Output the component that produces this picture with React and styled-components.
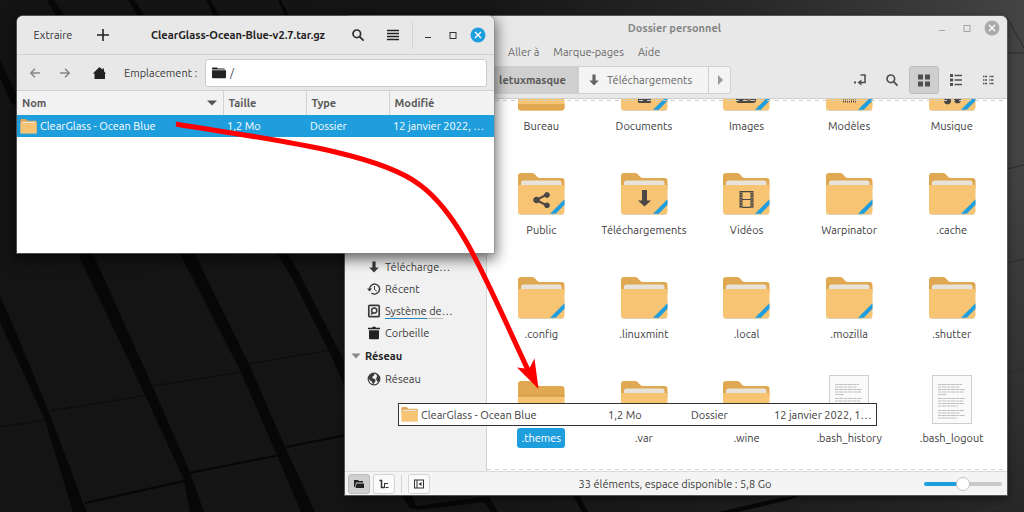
import React from "react";
import styled, { createGlobalStyle, css } from "styled-components";

const Global = createGlobalStyle`
  * { box-sizing: border-box; }
  body {
    margin: 0;
    background: #131313;
    color: #3c3c3c;
    font: 11px/16px "Ubuntu", "Open Sans", "Noto Sans", sans-serif;
  }
  button, input { font: inherit; color: inherit; }
`;

const Desktop = styled.main`
  position: relative;
  min-height: 100vh;
  overflow: hidden;
`;

const Wallpaper = styled.svg`
  position: absolute;
  inset: 0;
  width: 100%;
  height: 100%;
`;

const Window = styled.section`
  position: absolute;
  top: 16px;
  display: flex;
  flex-direction: column;
  overflow: hidden;
  border-radius: 6px 6px 0 0;
  background: #fff;
`;

const FilesWindow = styled(Window)`
  left: 345px;
  right: 17px;
  bottom: 17px;
  box-shadow: 0 0 0 1px #555, 0 3px 8px #0008;
`;

const ArchiveWindow = styled(Window)`
  left: 17px;
  width: 477px;
  height: 237px;
  box-shadow: 0 0 0 1px #8888, 0 4px 14px 2px #0009;
`;

const PlainButton = styled.button`
  display: inline-flex;
  align-items: center;
  justify-content: center;
  flex: none;
  padding: 0;
  border: 0;
  background: none;
`;

const WindowButton = styled(PlainButton)`
  width: 25px;
  height: 24px;
`;

const ToolButton = styled(PlainButton)`
  width: ${(p) => p.$width || 30}px;
  height: 28px;
  border-radius: 3px;
  color: ${(p) => (p.$strong ? "#2e2e2e" : "#505050")};
  ${(p) => p.$active && css`
    background: #cfcfcf;
    border: 1px solid #bfbfbf;
  `}
`;

/* ---------- file manager ---------- */

const FilesHeader = styled.header`
  flex: none;
  height: 83px;
  background: #e8e8e8;
  border-bottom: 1px solid #cdcdcd;
  color: #6a6a6a;
`;

const TitleRow = styled.div`
  display: grid;
  grid-template-columns: 1fr auto 1fr;
  align-items: center;
  height: 24px;
  padding-right: 3px;
`;

const Title = styled.h1`
  grid-column: 2;
  margin: 0;
  font-size: 11px;
  font-weight: 700;
  color: #858585;
`;

const TitleControls = styled.div`
  display: flex;
  justify-content: flex-end;
  button { color: #a4a4a4; }
`;

const MenuRow = styled.nav`
  display: flex;
  gap: 14px;
  align-items: center;
  height: 24px;
  padding-left: 163px;
`;

const ToolRow = styled.div`
  display: flex;
  justify-content: space-between;
  padding: 2px 4px 0 141px;
`;

const PathBar = styled.div`
  display: flex;
  height: 28px;
  border: 1px solid #d0d0d0;
  border-radius: 3px;
  background: #f4f4f4;
`;

const Crumb = styled(PlainButton)`
  gap: 6px;
  width: ${(p) => p.$width}px;
  border-right: 1px solid #d0d0d0;
  color: #666;
  ${(p) => p.$place && css`
    justify-content: flex-start;
    padding-left: 8px;
  `}
  &:last-child { border-right: 0; }
  ${(p) => p.$current && css`
    background: #cfcfcf;
    color: #5a5a5a;
    font-weight: 700;
  `}
`;

const ToolGroup = styled.div`
  display: flex;
  gap: 2px;
`;

const FilesBody = styled.div`
  display: flex;
  flex: 1;
  min-height: 0;
`;

const Sidebar = styled.nav`
  display: flex;
  flex-direction: column;
  justify-content: flex-end;
  flex: none;
  width: 142px;
  padding-bottom: 81px;
  overflow: hidden;
  background: #f1f1f1;
  border-right: 1px solid #d2d2d2;
`;

const Place = styled.a`
  display: flex;
  align-items: center;
  gap: 4px;
  height: 22px;
  padding-left: 22px;
  color: #3a3a3a;
  text-decoration: none;
`;

const PlaceName = styled.span`
  line-height: 16px;
  ${(p) => p.$usage && css`
    background: linear-gradient(90deg, #2a87bd 62%, #bbb 62%, #bbb 86%, #0000 86%) bottom / 100% 1px no-repeat;
  `}
`;

const PlaceGroup = styled.h2`
  display: flex;
  align-items: center;
  gap: 4px;
  height: 24px;
  margin: 0;
  padding-left: 6px;
  font-size: 11px;
  font-weight: 700;
  color: #222;
`;

const FilesView = styled.div`
  position: relative;
  display: flex;
  flex-direction: column;
  justify-content: flex-end;
  flex: 1;
  min-width: 0;
  overflow: hidden;
  background: #fff;
  &::before, &::after {
    content: "";
    position: absolute;
    left: 0;
    right: 0;
    height: 1px;
    background: repeating-linear-gradient(90deg, #cfcfcf 0 4px, #0000 4px 8px);
  }
  &::before { top: 1px; }
  &::after { bottom: 1px; }
`;

const IconGrid = styled.ul`
  display: grid;
  grid-template-columns: repeat(5, 1fr);
  row-gap: 31px;
  margin: 0;
  padding: 0 4px 23px 3px;
  list-style: none;
`;

const FileItem = styled.li`
  display: flex;
  flex-direction: column;
  align-items: center;
  gap: 5px;
  height: 73px;
`;

const FileIconBox = styled.span`
  display: block;
  height: 48px;
`;

const FileName = styled.span`
  padding: 2px 4px;
  border-radius: 3px;
  white-space: nowrap;
  background: ${(p) => (p.$selected ? "#1f9ede" : "none")};
  color: ${(p) => (p.$selected ? "#fff" : "#3c3c3c")};
`;

const StatusBar = styled.footer`
  display: grid;
  grid-template-columns: 1fr auto 1fr;
  align-items: center;
  flex: none;
  height: 24px;
  padding: 0 5px 0 3px;
  background: #f4f4f4;
  border-top: 1px solid #dcdcdc;
`;

const StatusGroup = styled.div`
  display: flex;
  align-items: center;
  gap: 3px;
`;

const StatusButton = styled(PlainButton)`
  width: 22px;
  height: 20px;
  border: 1px solid ${(p) => (p.$active ? "#bdbdbd" : "#d4d4d4")};
  border-radius: 3px;
  background: ${(p) => (p.$active ? "#cfcfcf" : "#fafafa")};
`;

const Divider = styled.span`
  width: 1px;
  height: ${(p) => p.$height}px;
  margin: 0 ${(p) => p.$space}px;
  background: #d4d4d4;
`;

const Zoom = styled.input`
  justify-self: end;
  width: 78px;
  height: 14px;
  margin: 0;
  appearance: none;
  background: none;
  &::-webkit-slider-runnable-track {
    height: 4px;
    border-radius: 2px;
    background: linear-gradient(90deg, #1f9ede 50%, #c9c9c9 50%);
  }
  &::-webkit-slider-thumb {
    appearance: none;
    width: 14px;
    height: 14px;
    margin-top: -5px;
    border: 1px solid #c4c4c4;
    border-radius: 50%;
    background: #fff;
  }
`;

/* ---------- archive manager ---------- */

const ArchiveHeader = styled.header`
  display: flex;
  align-items: center;
  flex: none;
  height: 39px;
  padding: 0 4px 0 6px;
  background: #e8e8e8;
  border-bottom: 1px solid #d0d0d0;
  color: #333;
`;

const ArchiveTitle = styled.h1`
  flex: 1;
  margin: 0 0 0 14px;
  font-size: 11px;
  font-weight: 700;
  text-align: center;
  white-space: nowrap;
  color: #222;
`;

const TextButton = styled(PlainButton)`
  width: 60px;
  height: 28px;
`;

const LocationRow = styled.div`
  display: flex;
  align-items: center;
  flex: none;
  height: 36px;
  padding: 0 7px 0 3px;
  background: #e8e8e8;
  border-bottom: 1px solid #d0d0d0;
`;

const LocationLabel = styled.label`
  width: 81px;
  margin-left: 6px;
  white-space: nowrap;
`;

const LocationField = styled.div`
  display: flex;
  align-items: center;
  flex: 1;
  gap: 4px;
  height: 28px;
  padding: 0 6px;
  border: 1px solid #cbcbcb;
  border-radius: 3px;
  background: #fff;
`;

const LocationInput = styled.input`
  flex: 1;
  min-width: 0;
  padding: 0;
  border: 0;
  outline: 0;
  background: none;
`;

const Listing = styled.table`
  width: 100%;
  table-layout: fixed;
  border-collapse: collapse;
`;

const HeadCell = styled.th`
  width: ${(p) => (p.$width ? p.$width + "px" : "auto")};
  height: 24px;
  padding: 0 5px;
  border-right: 1px solid #d2d2d2;
  background: #f2f2f2;
  font-weight: 700;
  text-align: left;
  color: #5a5a5a;
  &:last-child { border-right: 0; }
`;

const SortHead = styled.span`
  display: flex;
  align-items: center;
  justify-content: space-between;
`;

const Cell = styled.td`
  height: 22px;
  padding: 0 5px 0 ${(p) => (p.$first ? 3 : 4)}px;
  overflow: hidden;
  text-overflow: ellipsis;
  white-space: nowrap;
  background: #1f9ede;
  color: #fff;
`;

const NameWithIcon = styled.span`
  display: flex;
  align-items: center;
  gap: 3px;
`;

const DragRow = styled.div`
  position: absolute;
  left: 398px;
  top: 403px;
  display: grid;
  grid-template-columns: 207px 83px 83px 1fr;
  align-items: center;
  width: 479px;
  height: 23px;
  padding: 0 3px 0 2px;
  border: 1px solid #333;
  background: #fff;
  white-space: nowrap;
`;

const DragArrow = styled.svg`
  position: absolute;
  left: 0;
  top: 0;
  pointer-events: none;
`;

/* ---------- drawings ---------- */

const Svg = ({ w = 16, h = w, children }) => (
  <svg width={w} height={h} viewBox={`0 0 ${w} ${h}`} fill="none" stroke="currentColor" aria-hidden="true">
    {children}
  </svg>
);

const MinimizeIcon = () => <Svg w={14}><path d="M4 9.5h6" strokeWidth="1" /></Svg>;
const MaximizeIcon = () => <Svg w={14}><rect x="4" y="4.500" width="6" height="6" /></Svg>;
const CloseIcon = ({ fill }) => (
  <Svg w={16}>
    <circle cx="8" cy="8" r="7.5" fill={fill} stroke="none" />
    <path d="M5 5l6 6M11 5l-6 6" stroke="#fff" strokeWidth="1.4" />
  </Svg>
);
const SearchIcon = () => (
  <Svg w={14}><circle cx="5.8" cy="5.8" r="3.8" strokeWidth="1.7" /><path d="M8.6 8.6l4 4" strokeWidth="1.9" /></Svg>
);
const DownIcon = () => (
  <Svg w={14}><path d="M5.4 1.5h3.200v6h3.200L7 12.600 2.200 7.500h3.200z" fill="currentColor" stroke="none" /></Svg>
);
const ArrowIcon = ({ flip }) => (
  <Svg w={14}><path d={flip ? "M2 7h9M7 2.800L11.200 7 7 11.200" : "M12 7H3M7 2.800L2.800 7 7 11.200"} strokeWidth="1.5" stroke="#858585" /></Svg>
);
const HomeIcon = () => (
  <Svg w={14}><path d="M7.500 1L.8 7.500H2.500V13h10.500V7.500h1L12 5.300V2.500h-1.500v1.300z" fill="#222" stroke="none" /></Svg>
);
const SolidFolder = () => (
  <Svg w={14}><path d="M0 2.500q0-1 1-1h4l1 1h6q1 0 1 1H0zM0 4.300h14v7q0 1-1 1H1q-1 0-1-1z" fill="#222" stroke="none" /></Svg>
);
const RecentIcon = () => (
  <Svg w={14}>
    <path d="M2.600 7.500A5 5 0 1 1 4.500 11" strokeWidth="1.400" />
    <path d="M7.500 4v3.500l2.200 1.600" />
    <path d="M0 6.500h5L2.500 9.500z" fill="currentColor" stroke="none" />
  </Svg>
);
const DiskIcon = () => (
  <Svg w={14}>
    <rect x="1.800" y="1.300" width="10.400" height="11.400" rx="1" strokeWidth="1.700" />
    <circle cx="7.200" cy="6.500" r="2.600" strokeWidth="1.500" />
    <path d="M4 10.300l2-1.600" strokeWidth="1.500" />
  </Svg>
);
const TrashIcon = () => (
  <Svg w={14}><path d="M1 1.800H5l.7-1h2.600l.7 1h4v1.500H1zM2 4.200h10v8q0 1-1 1H3q-1 0-1-1z" fill="#222" stroke="none" /></Svg>
);
const GlobeIcon = () => (
  <Svg w={14}>
    <circle cx="7" cy="7" r="5.800" strokeWidth="1.200" />
    <path d="M1.500 5.500L4 2l3.500-.500-.5 2-2 1.500 1 1.500 2.500.8-.2 2.200L6 12.500 4.800 9.500 2.500 8zM9.500 2l3 3-.2 4-2 1L9 6.500l1-1.500z" fill="currentColor" stroke="none" />
  </Svg>
);

const Emblem = ({ kind }) => {
  const dark = "#4a4744";
  switch (kind) {
    case "share":
      return (
        <g fill={dark} stroke={dark}>
          <path d="M30 27.500L19 33l11 5.500" fill="none" strokeWidth="2" />
          <circle cx="19.500" cy="33" r="2.800" /><circle cx="30" cy="28" r="2.400" /><circle cx="30" cy="38.300" r="2.400" />
        </g>
      );
    case "down":
      return <path d="M22 23h5v10.500h4L24.500 39.500 18 33.500h4z" fill={dark} stroke="none" />;
    case "film":
      return (
        <g stroke={dark} fill="none">
          <path d="M19 24v17M30 24v17" strokeWidth="3" />
          <path d="M19 25v16M30 25v16" stroke="#f7c473" strokeDasharray="1 1.500" />
          <path d="M20 24.700h9M20 32.500h9M20 40.300h9" strokeWidth="1.200" />
        </g>
      );
    case "document":
      return <path d="M18 24h13v15q0 1-1 1H19q-1 0-1-1z" fill={dark} stroke="none" />;
    case "image":
      return <><path d="M14 26h20v11q0 3-3 3H17q-3 0-3-3z" fill={dark} stroke="none" /><path d="M20 38l3-2 2 1 3-2 2 3z" fill="#8b7450" stroke="none" /></>;
    case "template":
      return <path d="M18 26.500h13M18 29.500h13M18 32.500h13M18 35.500h13M18 38.500h13" stroke={dark} strokeWidth="2" strokeDasharray="1 1" />;
    case "music":
      return <g fill={dark} stroke={dark}><circle cx="19.500" cy="38" r="3" /><circle cx="29.500" cy="37" r="3" /><path d="M22 38V26l10-2v13" fill="none" strokeWidth="1" /></g>;
    default:
      return null;
  }
};

const FolderIcon = ({ emblem, plain, size = 48 }) => (
  <svg width={size} height={size} viewBox={plain ? "0 3 48 48" : "0 0 48 48"} fill="none" aria-hidden="true">
    <path d="M1 9q0-3 3-3h11c3.500 0 4.500 5 8 5h21.500q3 0 3 3v8H1z" fill="#e0a850" />
    <path d="M4 18v-2q0-2.500 2.500-2.500h35.500q2.500 0 2.500 2.500v2z" fill="#e7e2da" />
    <path d="M1 18h46.500v26.500q0 2.500-2.500 2.500H3.500Q1 47 1 44.500z" fill="#f7c473" />
    <path d="M1.500 46.500q1 1 2 1h41q2 0 2.500-1" stroke="#d9c39c" strokeWidth=".8" />
    <Emblem kind={emblem} />
    {!plain && <path d="M33 46.800L47.500 32.300v5.500L38.800 46.800z" fill="#1f9ede" />}
  </svg>
);

const OpenFolderIcon = () => (
  <svg width="48" height="48" viewBox="0 0 48 48" aria-hidden="true">
    <path d="M1 9q0-3 3-3h11c3.500 0 4.500 5 8 5h21.500q3 0 3 3v8H1z" fill="#e0a850" />
    <path d="M1 21h46.500v23.500q0 2.500-2.500 2.500H3.500Q1 47 1 44.500z" fill="#f7c473" />
    <path d="M1 20.500h46.500v1H1z" fill="#c9923d" />
  </svg>
);

const DesktopFolderIcon = () => (
  <svg width="48" height="48" viewBox="0 0 48 48" aria-hidden="true">
    <path d="M1 8h46.500v36.500q0 3-3 3H4q-3 0-3-3z" fill="#f7c473" />
    <path d="M1 41h46.500v3.500q0 3-3 3H4q-3 0-3-3z" fill="#e0a850" />
  </svg>
);

const TextFileIcon = () => (
  <svg width="48" height="50" viewBox="0 0 48 50" fill="none" aria-hidden="true">
    <rect x="4.500" y=".5" width="39" height="48" fill="#fafafa" stroke="#cfcfcf" />
    {[9.500, 12, 14.500, 17, 19.500, 23.500, 26, 28.500, 31, 35.500, 38, 40.500, 43].map((y, i) => (
      <path key={y} d={`M10 ${y}h${[24, 22, 27, 26, 9, 27, 25, 26, 20, 26, 22, 27, 19][i]}`} stroke="#b8b8b8" strokeWidth=".9" strokeDasharray="3 .5 5 .6" />
    ))}
  </svg>
);

const WallpaperArt = () => (
  <Wallpaper viewBox="0 0 1024 512" preserveAspectRatio="xMidYMid slice" aria-hidden="true">
    <defs>
      <linearGradient id="sheen" x1="0" y1="0" x2="1" y2="0">
        <stop offset="0" stopColor="#141414" />
        <stop offset=".45" stopColor="#151515" />
        <stop offset=".75" stopColor="#2a2a2a" />
        <stop offset="1" stopColor="#444" />
      </linearGradient>
      <linearGradient id="dusk" x1="0" y1="0" x2="0" y2="1">
        <stop offset=".3" stopColor="#141414" stopOpacity="0" />
        <stop offset="1" stopColor="#141414" stopOpacity=".6" />
      </linearGradient>
    </defs>
    <path d="M0 0h1024v512H0z" fill="url(#sheen)" />
    <path d="M0 0h1024v512H0z" fill="url(#dusk)" />
    <g fill="#070707">
      <path d="M0 296l13 29 37 90 34 90 3 7H73L45 420 0 322z" />
      <path d="M78 254h15l22 49 37 82 37 85 15 42h-14l-6-32-39-85-38-80z" />
      <path d="M180 254h15l16 33 37 75 38 87 29 63h-14l-24-57-37-85-37-72z" />
      <path d="M277 254h11l10 17 37 72 12 24v25l-17-39-38-75z" />
      <path d="M0 60l16 34v12L11 102 0 78zM47 0h7l11 18h-8zM128 0h7l10 18h-6zM206 0h5l9 18h-5zM278 0h3l9 18h-4z" />
      <path d="M402 496h10l4 10 66-9h7l9 15h-7l-7-10-66 8-8-2zM572 494h7l9 18h-6zM718 512l62-14 22-3-10 4-54 13z" />
    </g>
    <g stroke="#070707">
      <path d="M0 427l45-7M50 411l98-16M152 386l91-14M248 364l82-14" strokeWidth=".8" />
      <path d="M85 503l99-22M189 473l91-18M286 447l60-12" strokeWidth="2" />
    </g>
    <path d="M1007 18l17 30M1007 53h17M1007 169l17-4M1007 263l17-4M1007 373l17-4M1007 438l17-4M980 512l44-10" stroke="#2c2c2c" />
  </Wallpaper>
);

const files = [
  ["Bureau", "desktop"], ["Documents", "document"], ["Images", "image"], ["Modèles", "template"], ["Musique", "music"],
  ["Public", "share"], ["Téléchargements", "down"], ["Vidéos", "film"], ["Warpinator"], [".cache"],
  [".config"], [".linuxmint"], [".local"], [".mozilla"], [".shutter"],
  [".themes", "open"], [".var"], [".wine"], [".bash_history", "text"], [".bash_logout", "text"],
];

const FileIcon = ({ kind }) => {
  if (kind === "desktop") return <DesktopFolderIcon />;
  if (kind === "open") return <OpenFolderIcon />;
  if (kind === "text") return <TextFileIcon />;
  return <FolderIcon emblem={kind} />;
};

const places = [
  ["Télécharge…", DownIcon],
  ["Récent", RecentIcon],
  ["Système de…", DiskIcon],
  ["Corbeille", TrashIcon],
];

const FileManager = () => (
  <FilesWindow aria-label="Dossier personnel">
    <FilesHeader>
      <TitleRow>
        <Title>Dossier personnel</Title>
        <TitleControls>
          <WindowButton aria-label="Réduire"><MinimizeIcon /></WindowButton>
          <WindowButton aria-label="Agrandir"><MaximizeIcon /></WindowButton>
          <WindowButton aria-label="Fermer"><CloseIcon fill="#a9a9a9" /></WindowButton>
        </TitleControls>
      </TitleRow>
      <MenuRow>
        <PlainButton>Aller à</PlainButton>
        <PlainButton>Marque-pages</PlainButton>
        <PlainButton>Aide</PlainButton>
      </MenuRow>
      <ToolRow>
        <PathBar>
          <Crumb $width={92} $current>letuxmasque</Crumb>
          <Crumb $width={130} $place><DownIcon />Téléchargements</Crumb>
          <Crumb $width={21} aria-label="Suivant">
            <Svg w={10}><path d="M3 0l5 5-5 5z" fill="#999" stroke="none" /></Svg>
          </Crumb>
        </PathBar>
        <ToolGroup>
          <ToolButton aria-label="Emplacement">
            <Svg w={14}>
              <path d="M7.500 2h4.500v7.500H6" strokeWidth="1.600" />
              <path d="M8.500 6.500v6l-4-3zM1 8.500h2v2H1z" fill="currentColor" stroke="none" />
            </Svg>
          </ToolButton>
          <ToolButton aria-label="Rechercher"><SearchIcon /></ToolButton>
          <ToolButton aria-label="Icônes" $active>
            <Svg w={14}><path d="M1 1.500h5v5H1zM8 1.500h5v5H8zM1 8.500h5v5H1zM8 8.500h5v5H8z" fill="currentColor" stroke="none" /></Svg>
          </ToolButton>
          <ToolButton aria-label="Liste">
            <Svg w={14}>
              <path d="M1 1h3v3H1zM1 5.500h3v3H1zM1 10h3v3H1z" fill="currentColor" stroke="none" />
              <path d="M5.500 2.500H13M5.500 7H13M5.500 11.500H13" strokeWidth="1.300" />
            </Svg>
          </ToolButton>
          <ToolButton aria-label="Compact">
            <Svg w={14}>
              <path d="M2 3.500h1.200M3.800 3.500H6M8.300 3.500h1.200M10.100 3.500h2.400M2 7h1.200M3.800 7H6M8.300 7h1.200M10.100 7h2.400M2 10.500h1.200M3.800 10.500H6M8.300 10.500h1.200M10.100 10.500h2.400" strokeWidth="1.700" />
            </Svg>
          </ToolButton>
        </ToolGroup>
      </ToolRow>
    </FilesHeader>
    <FilesBody>
      <Sidebar>
        {places.map(([name, Icon]) => (
          <Place key={name} href="#">
            <Icon />
            <PlaceName $usage={Icon === DiskIcon}>{name}</PlaceName>
          </Place>
        ))}
        <PlaceGroup>
          <Svg w={10}><path d="M.5 2.500h9L5 7.500z" fill="#888" stroke="none" /></Svg>
          Réseau
        </PlaceGroup>
        <Place href="#"><GlobeIcon /><PlaceName>Réseau</PlaceName></Place>
      </Sidebar>
      <FilesView>
        <IconGrid>
          {files.map(([name, kind]) => (
            <FileItem key={name}>
              <FileIconBox><FileIcon kind={kind} /></FileIconBox>
              <FileName $selected={kind === "open"}>{name}</FileName>
            </FileItem>
          ))}
        </IconGrid>
      </FilesView>
    </FilesBody>
    <StatusBar>
      <StatusGroup>
        <StatusButton $active aria-label="Raccourcis">
          <Svg w={12}><path d="M1 2h4l1 1h4v1.500H3L2 9H1zM3.500 5.500H11V10H2.500z" fill="#222" stroke="none" /></Svg>
        </StatusButton>
        <StatusButton aria-label="Arborescence">
          <Svg w={12}><path d="M1.500 2.500H4M3.500 2v7.500H6.500" strokeWidth="1.500" stroke="#333" /><path d="M6.500 5.500H10M6.500 5v5M7.500 9.500H10.500" stroke="#333" /></Svg>
        </StatusButton>
        <Divider $height={18} $space={3} />
        <StatusButton aria-label="Masquer le panneau">
          <Svg w={12}><rect x="1.500" y="2" width="9" height="8" stroke="#333" /><path d="M4 2v8" stroke="#333" /><path d="M8.500 4v4L5.500 6z" fill="#333" stroke="none" /></Svg>
        </StatusButton>
      </StatusGroup>
      <span>33 éléments, espace disponible : 5,8 Go</span>
      <Zoom type="range" aria-label="Zoom" min="0" max="100" defaultValue="50" />
    </StatusBar>
  </FilesWindow>
);

const ArchiveManager = () => (
  <ArchiveWindow aria-label="ClearGlass-Ocean-Blue-v2.7.tar.gz">
    <ArchiveHeader>
      <TextButton>Extraire</TextButton>
      <ToolButton $width={39} aria-label="Ajouter">
        <Svg w={14}><path d="M7 1v12M1 7h12" stroke="#222" strokeWidth="1.600" /></Svg>
      </ToolButton>
      <ArchiveTitle>ClearGlass-Ocean-Blue-v2.7.tar.gz</ArchiveTitle>
      <ToolButton $strong $width={35} aria-label="Rechercher"><SearchIcon /></ToolButton>
      <ToolButton $strong $width={35} aria-label="Menu">
        <Svg w={14}><path d="M1 2.500h12M1 5.500h12M1 8.500h12M1 11.500h12" stroke="#222" strokeWidth="1.300" /></Svg>
      </ToolButton>
      <Divider $height={28} $space={2} />
      <WindowButton aria-label="Réduire"><MinimizeIcon /></WindowButton>
      <WindowButton aria-label="Agrandir"><MaximizeIcon /></WindowButton>
      <WindowButton aria-label="Fermer"><CloseIcon fill="#1f9ede" /></WindowButton>
    </ArchiveHeader>
    <LocationRow>
      <ToolButton aria-label="Précédent"><ArrowIcon /></ToolButton>
      <ToolButton aria-label="Suivant"><ArrowIcon flip /></ToolButton>
      <ToolButton $width={38} aria-label="Accueil"><HomeIcon /></ToolButton>
      <LocationLabel htmlFor="location">Emplacement :</LocationLabel>
      <LocationField>
        <SolidFolder />
        <LocationInput id="location" defaultValue="/" />
      </LocationField>
    </LocationRow>
    <Listing>
      <thead>
        <tr>
          <HeadCell $width={206}>
            <SortHead>Nom<Svg w={12}><path d="M1 3.500h10L6 8.500z" fill="#555" stroke="none" /></Svg></SortHead>
          </HeadCell>
          <HeadCell $width={83}>Taille</HeadCell>
          <HeadCell $width={83}>Type</HeadCell>
          <HeadCell>Modifié</HeadCell>
        </tr>
      </thead>
      <tbody>
        <tr>
          <Cell $first><NameWithIcon><FolderIcon plain size={17} />ClearGlass - Ocean Blue</NameWithIcon></Cell>
          <Cell>1,2 Mo</Cell>
          <Cell>Dossier</Cell>
          <Cell>12 janvier 2022, …</Cell>
        </tr>
      </tbody>
    </Listing>
  </ArchiveWindow>
);

export default function App() {
  return (
    <>
      <Global />
      <Desktop>
        <WallpaperArt />
        <FileManager />
        <ArchiveManager />
        <DragRow>
          <NameWithIcon><FolderIcon plain size={17} />ClearGlass - Ocean Blue</NameWithIcon>
          <span>1,2 Mo</span>
          <span>Dossier</span>
          <span>12 janvier 2022, 1…</span>
        </DragRow>
        <DragArrow width="560" height="400" viewBox="0 0 560 400" fill="none" aria-hidden="true">
          <path d="M176 124C250 137 375 150 420 185C462 216 487 283 528 370" stroke="#f00" strokeWidth="5" />
          <path d="M538.500 389L517 367.500l12 1.500 5.500-10.500z" fill="#f00" />
        </DragArrow>
      </Desktop>
    </>
  );
}
